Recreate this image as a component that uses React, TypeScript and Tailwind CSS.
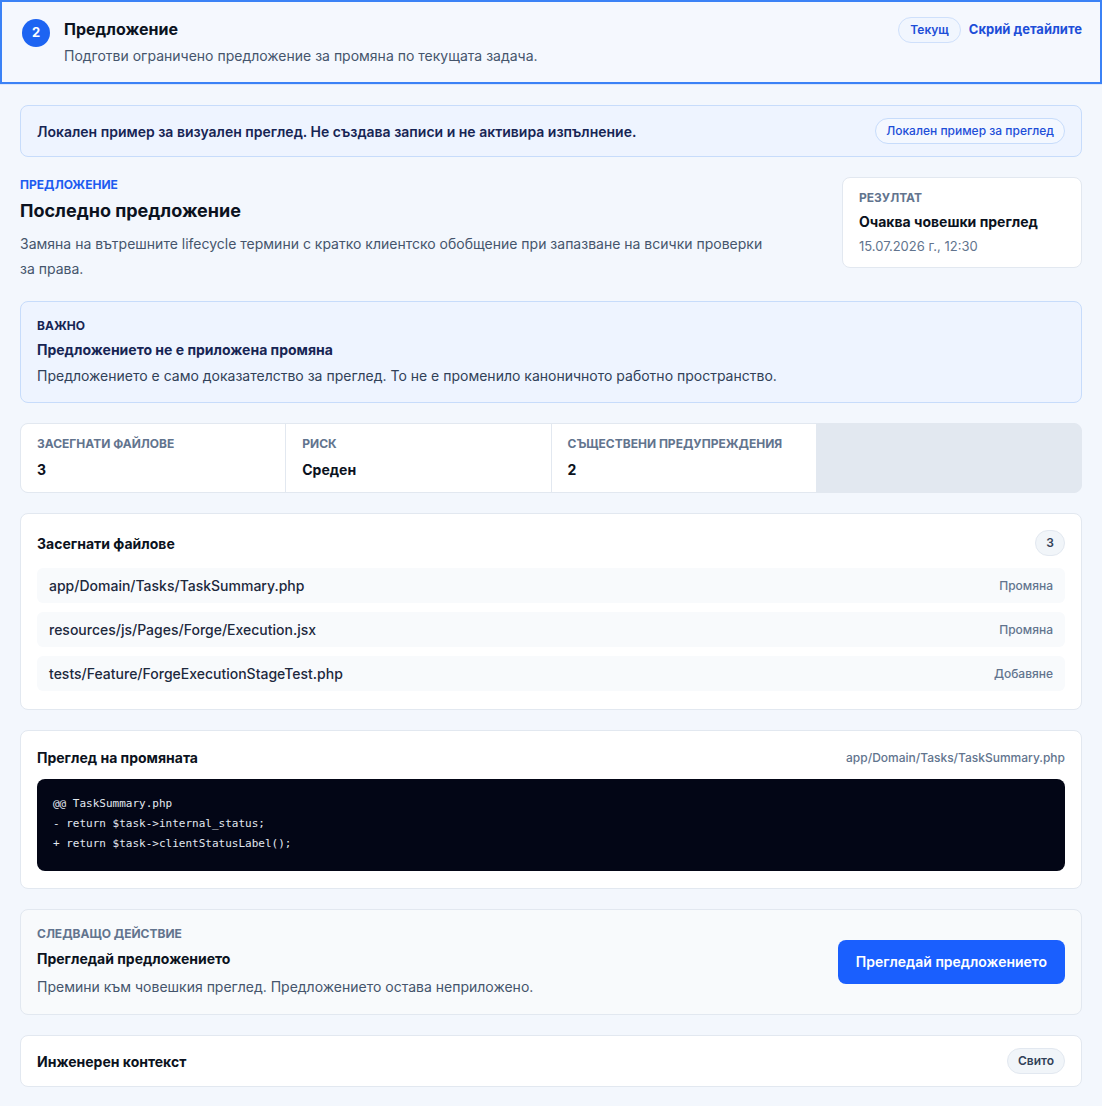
import React from "react";

const files = [
  { path: "app/Domain/Tasks/TaskSummary.php", kind: "Промяна" },
  { path: "resources/js/Pages/Forge/Execution.jsx", kind: "Промяна" },
  { path: "tests/Feature/ForgeExecutionStageTest.php", kind: "Добавяне" },
];

const stats = [
  { label: "Засегнати файлове", value: "3" },
  { label: "Риск", value: "Среден" },
  { label: "Съществени предупреждения", value: "2" },
];

export default function App() {
  return (
    <div
      lang="bg"
      className="min-h-[1106px] w-[1102px] bg-[#f3f7fd] font-['Inter','Noto_Sans',sans-serif] text-slate-900 antialiased"
    >
      {/* step header */}
      <div className="border-b border-[#dbe7fb]">
        <div className="flex items-start gap-[14px] border-2 border-[#3b82f6] bg-[#f5f8fe] pb-[16px] pl-5 pr-[18px] pt-[15px]">
          <div className="mt-[2px] flex h-[28px] w-[28px] shrink-0 items-center justify-center rounded-full bg-[#1d64f2] text-[13px] font-bold text-white">
            2
          </div>
          <div className="flex-1">
            <div className="text-[16px] font-bold leading-[24px] text-[#0b1220]">Предложение</div>
            <div className="mt-[5px] text-[14px] leading-[20px] text-slate-600">
              Подготви ограничено предложение за промяна по текущата задача.
            </div>
          </div>
          <div className="flex items-center gap-2">
            <span className="rounded-full border border-[#cfe0fb] bg-[#f1f6fe] px-[11px] py-[4px] text-[12px] font-semibold leading-[16px] text-[#1d4ed8]">
              Текущ
            </span>
            <span className="text-[13px] font-bold text-[#1d4ed8]">Скрий детайлите</span>
          </div>
        </div>
      </div>

      <div className="flex flex-col gap-5 px-5 pb-5 pt-5">
        {/* local sample notice */}
        <div className="flex items-center justify-between rounded-lg border border-[#c7dcfb] bg-[#eef4ff] py-[12px] pl-4 pr-4">
          <span className="text-[14px] font-semibold text-[#172554]">
            Локален пример за визуален преглед. Не създава записи и не активира изпълнение.
          </span>
          <span className="rounded-full border border-[#c7dcfb] bg-[#f4f8ff] px-[10px] py-[4px] text-[12px] font-medium leading-[16px] text-[#1d4ed8]">
            Локален пример за преглед
          </span>
        </div>

        {/* proposal summary */}
        <div className="flex items-start justify-between gap-6">
          <div className="max-w-[745px]">
            <div className="text-[12px] font-bold uppercase leading-[16px] text-[#1d5cf0]">Предложение</div>
            <div className="mt-[6px] text-[18px] font-bold leading-[24px] text-[#0b1220]">Последно предложение</div>
            <p className="mt-[8px] text-[14px] leading-[25px] text-slate-600">
              Замяна на вътрешните lifecycle термини с кратко клиентско обобщение при запазване на всички проверки за права.
            </p>
          </div>
          <div className="w-[240px] shrink-0 rounded-lg border border-slate-200 bg-white px-4 pb-[12px] pt-[12px]">
            <div className="text-[12px] font-bold uppercase leading-[16px] text-slate-500">Резултат</div>
            <div className="mt-[7px] text-[14px] font-bold leading-[18px] text-[#0b1220]">Очаква човешки преглед</div>
            <div className="mt-[6px] text-[13px] leading-[18px] text-slate-500">15.07.2026 г., 12:30</div>
          </div>
        </div>

        {/* important notice */}
        <div className="rounded-lg border border-[#c7dcfb] bg-[#eef4ff] px-4 pb-[16px] pt-[16px]">
          <div className="text-[12px] font-bold uppercase leading-[16px] text-[#172554]">Важно</div>
          <div className="mt-[6px] text-[14px] font-bold leading-[20px] text-[#172554]">
            Предложението не е приложена промяна
          </div>
          <div className="mt-[6px] text-[14px] leading-[20px] text-slate-700">
            Предложението е само доказателство за преглед. То не е променило каноничното работно пространство.
          </div>
        </div>

        {/* stats */}
        <div className="grid grid-cols-4 gap-px overflow-hidden rounded-lg border border-slate-200 bg-slate-200">
          {stats.map((s) => (
            <div key={s.label} className="bg-white px-4 pb-[13px] pt-[12px]">
              <div className="text-[12px] font-bold uppercase leading-[16px] text-slate-500">{s.label}</div>
              <div className="mt-[9px] text-[14px] font-bold leading-[18px] text-[#0b1220]">{s.value}</div>
            </div>
          ))}
        </div>

        {/* affected files */}
        <div className="rounded-lg border border-slate-200 bg-white px-4 pb-[18px] pt-4">
          <div className="flex items-center justify-between">
            <span className="text-[14px] font-bold text-[#0b1220]">Засегнати файлове</span>
            <span className="flex h-[26px] min-w-[30px] items-center justify-center rounded-full border border-slate-200 bg-slate-100 px-[10px] text-[12px] font-semibold text-slate-700">
              3
            </span>
          </div>
          <div className="mt-[12px] flex flex-col gap-[9px]">
            {files.map((f) => (
              <div key={f.path} className="flex h-[35px] items-center justify-between rounded-md bg-slate-50 px-3">
                <span className="text-[14px] font-medium text-slate-800">{f.path}</span>
                <span className="text-[12px] font-medium text-slate-500">{f.kind}</span>
              </div>
            ))}
          </div>
        </div>

        {/* diff preview */}
        <div className="rounded-lg border border-slate-200 bg-white px-4 pb-[17px] pt-[16px]">
          <div className="flex items-center justify-between">
            <span className="text-[14px] font-bold text-[#0b1220]">Преглед на промяната</span>
            <span className="text-[12px] font-medium text-slate-500">app/Domain/Tasks/TaskSummary.php</span>
          </div>
          <pre className="mt-[11px] rounded-lg bg-[#030616] px-4 pb-[17px] pt-[15px] font-['DejaVu_Sans_Mono',monospace] text-[11px] leading-[20px] text-slate-200">
{`@@ TaskSummary.php
- return $task->internal_status;
+ return $task->clientStatusLabel();`}
          </pre>
        </div>

        {/* next action */}
        <div className="flex items-center justify-between rounded-lg border border-slate-200 bg-[#f8fafc] px-4 pb-[17px] pt-[16px]">
          <div>
            <div className="text-[12px] font-bold uppercase leading-[16px] text-slate-500">Следващо действие</div>
            <div className="mt-[7px] text-[14px] font-bold leading-[20px] text-[#0b1220]">Прегледай предложението</div>
            <div className="mt-[8px] text-[14px] leading-[20px] text-slate-600">
              Премини към човешкия преглед. Предложението остава неприложено.
            </div>
          </div>
          <button className="h-[44px] rounded-lg bg-[#1a5ffe] px-[18px] text-[14px] font-semibold text-white">
            Прегледай предложението
          </button>
        </div>

        {/* engineering context */}
        <div className="flex items-center justify-between rounded-lg border border-slate-200 bg-white px-4 pb-[12px] pt-[12px]">
          <span className="text-[14px] font-bold text-[#0b1220]">Инженерен контекст</span>
          <span className="flex h-[26px] items-center rounded-full border border-slate-200 bg-slate-100 px-[10px] text-[12px] font-semibold text-slate-700">
            Свито
          </span>
        </div>
      </div>
      <div className="border-b border-slate-200" />
    </div>
  );
}
